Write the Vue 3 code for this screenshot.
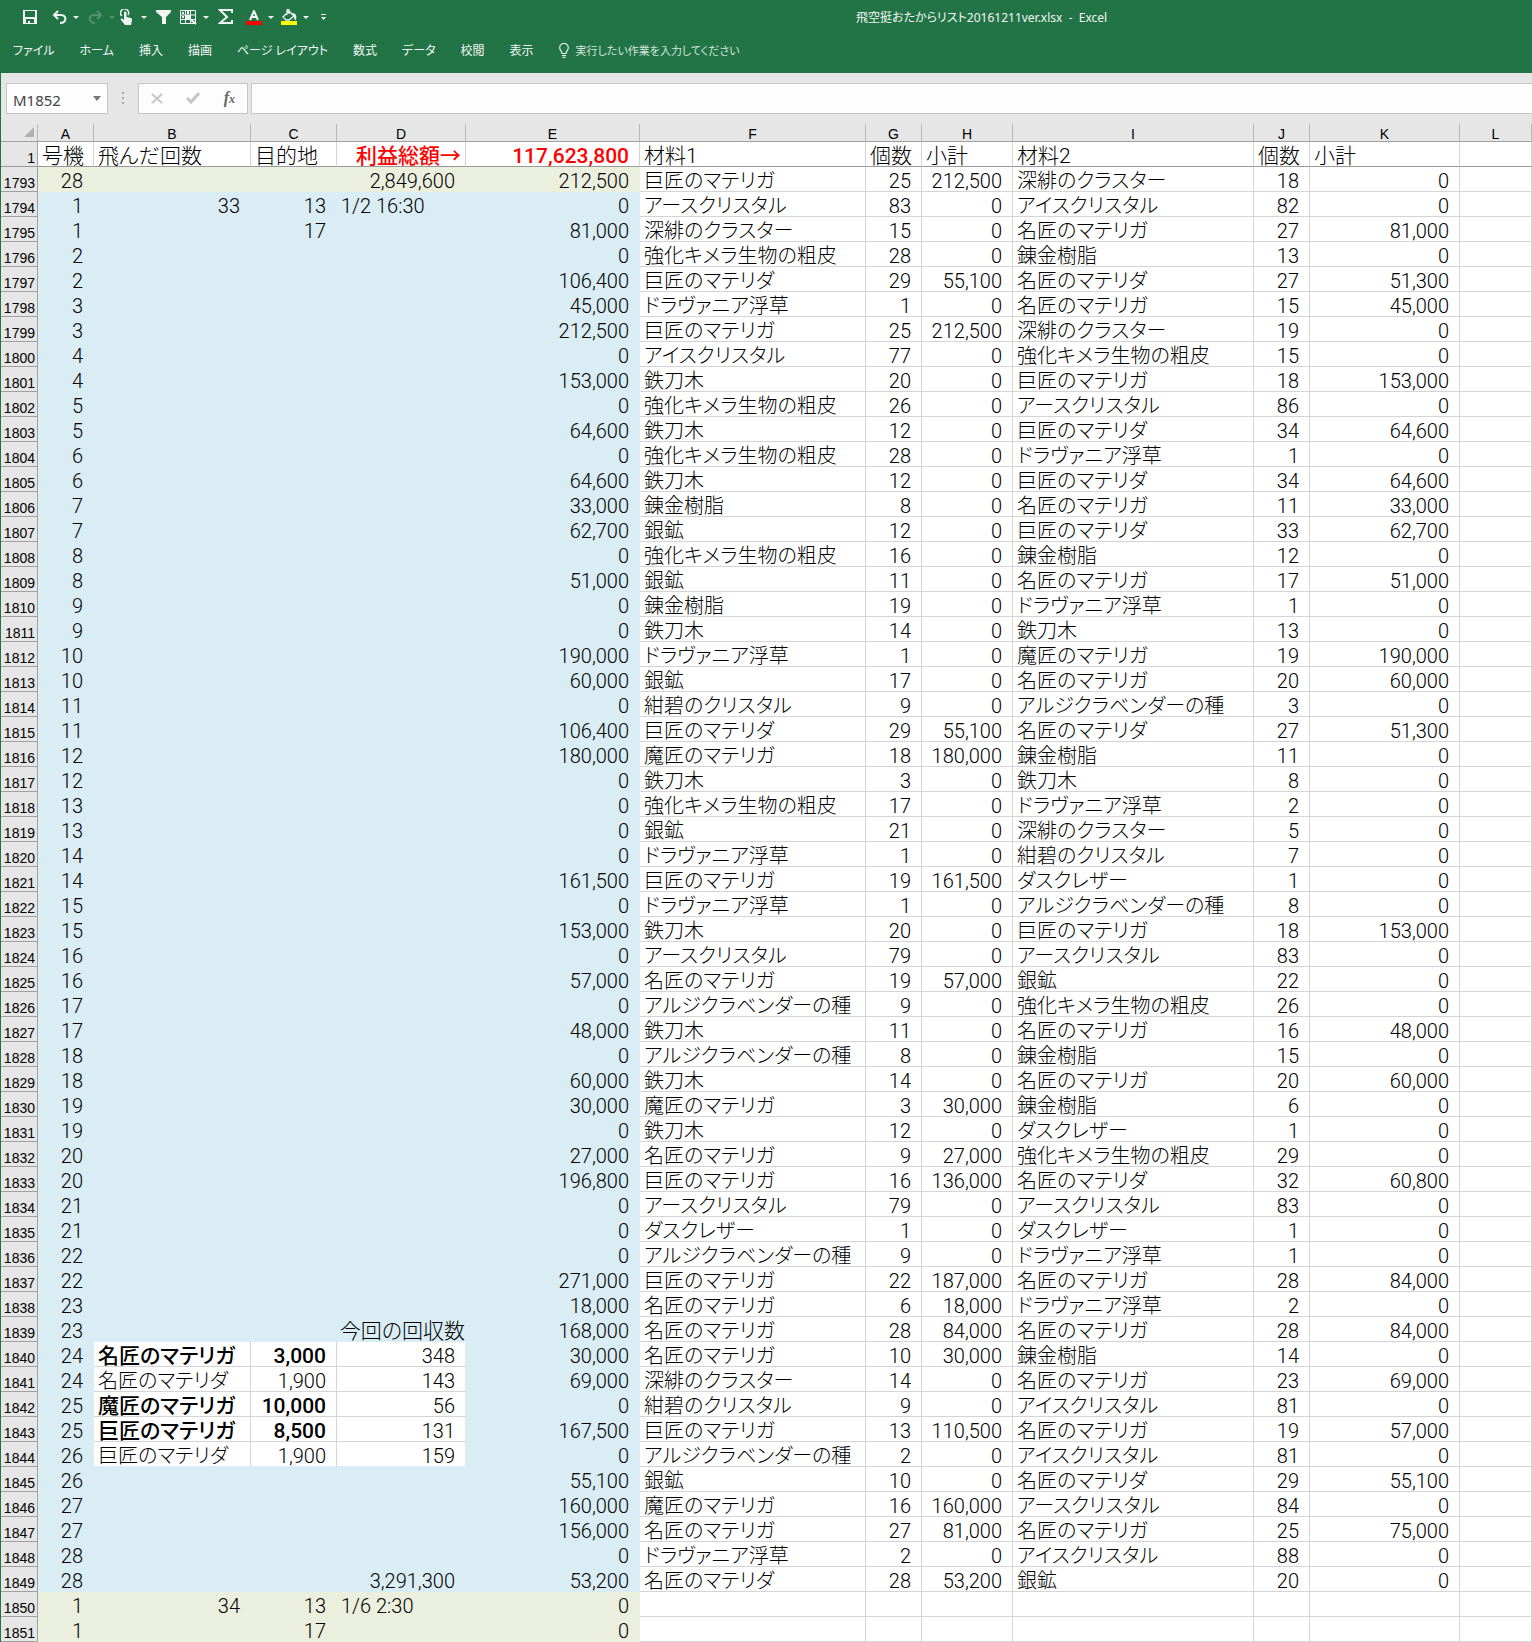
<script setup>
import { ref } from 'vue'

const cellName = ref('M1852')
const formula = ref('')
const tabs = ['ファイル', 'ホーム', '挿入', '描画', 'ページ レイアウト', '数式', 'データ', '校閲', '表示']
const columns = ['A', 'B', 'C', 'D', 'E', 'F', 'G', 'H', 'I', 'J', 'K', 'L']

const GA_MEI = '名匠のマテリガ'
const DA_MEI = '名匠のマテリダ'
const GA_KYO = '巨匠のマテリガ'
const DA_KYO = '巨匠のマテリダ'
const GA_MA = '魔匠のマテリガ'
const EARTH = 'アースクリスタル'
const ICE = 'アイスクリスタル'
const CLUSTER = '深緋のクラスター'
const CRYSTAL = '紺碧のクリスタル'
const HIDE = '強化キメラ生物の粗皮'
const RESIN = '錬金樹脂'
const WOOD = '鉄刀木'
const SILVER = '銀鉱'
const GRASS = 'ドラヴァニア浮草'
const SEED = 'アルジクラベンダーの種'
const LEATHER = 'ダスクレザー'

// 号機, 利益, 材料1, 個数, 小計, 材料2, 個数, 小計
const records = [
  [28, 212500, GA_KYO, 25, 212500, CLUSTER, 18, 0],
  [1, 0, EARTH, 83, 0, ICE, 82, 0],
  [1, 81000, CLUSTER, 15, 0, GA_MEI, 27, 81000],
  [2, 0, HIDE, 28, 0, RESIN, 13, 0],
  [2, 106400, DA_KYO, 29, 55100, DA_MEI, 27, 51300],
  [3, 45000, GRASS, 1, 0, GA_MEI, 15, 45000],
  [3, 212500, GA_KYO, 25, 212500, CLUSTER, 19, 0],
  [4, 0, ICE, 77, 0, HIDE, 15, 0],
  [4, 153000, WOOD, 20, 0, GA_KYO, 18, 153000],
  [5, 0, HIDE, 26, 0, EARTH, 86, 0],
  [5, 64600, WOOD, 12, 0, DA_KYO, 34, 64600],
  [6, 0, HIDE, 28, 0, GRASS, 1, 0],
  [6, 64600, WOOD, 12, 0, DA_KYO, 34, 64600],
  [7, 33000, RESIN, 8, 0, GA_MEI, 11, 33000],
  [7, 62700, SILVER, 12, 0, DA_KYO, 33, 62700],
  [8, 0, HIDE, 16, 0, RESIN, 12, 0],
  [8, 51000, SILVER, 11, 0, GA_MEI, 17, 51000],
  [9, 0, RESIN, 19, 0, GRASS, 1, 0],
  [9, 0, WOOD, 14, 0, WOOD, 13, 0],
  [10, 190000, GRASS, 1, 0, GA_MA, 19, 190000],
  [10, 60000, SILVER, 17, 0, GA_MEI, 20, 60000],
  [11, 0, CRYSTAL, 9, 0, SEED, 3, 0],
  [11, 106400, DA_KYO, 29, 55100, DA_MEI, 27, 51300],
  [12, 180000, GA_MA, 18, 180000, RESIN, 11, 0],
  [12, 0, WOOD, 3, 0, WOOD, 8, 0],
  [13, 0, HIDE, 17, 0, GRASS, 2, 0],
  [13, 0, SILVER, 21, 0, CLUSTER, 5, 0],
  [14, 0, GRASS, 1, 0, CRYSTAL, 7, 0],
  [14, 161500, GA_KYO, 19, 161500, LEATHER, 1, 0],
  [15, 0, GRASS, 1, 0, SEED, 8, 0],
  [15, 153000, WOOD, 20, 0, GA_KYO, 18, 153000],
  [16, 0, EARTH, 79, 0, EARTH, 83, 0],
  [16, 57000, GA_MEI, 19, 57000, SILVER, 22, 0],
  [17, 0, SEED, 9, 0, HIDE, 26, 0],
  [17, 48000, WOOD, 11, 0, GA_MEI, 16, 48000],
  [18, 0, SEED, 8, 0, RESIN, 15, 0],
  [18, 60000, WOOD, 14, 0, GA_MEI, 20, 60000],
  [19, 30000, GA_MA, 3, 30000, RESIN, 6, 0],
  [19, 0, WOOD, 12, 0, LEATHER, 1, 0],
  [20, 27000, GA_MEI, 9, 27000, HIDE, 29, 0],
  [20, 196800, GA_KYO, 16, 136000, DA_MEI, 32, 60800],
  [21, 0, EARTH, 79, 0, EARTH, 83, 0],
  [21, 0, LEATHER, 1, 0, LEATHER, 1, 0],
  [22, 0, SEED, 9, 0, GRASS, 1, 0],
  [22, 271000, GA_KYO, 22, 187000, GA_MEI, 28, 84000],
  [23, 18000, GA_MEI, 6, 18000, GRASS, 2, 0],
  [23, 168000, GA_MEI, 28, 84000, GA_MEI, 28, 84000],
  [24, 30000, GA_MEI, 10, 30000, RESIN, 14, 0],
  [24, 69000, CLUSTER, 14, 0, GA_MEI, 23, 69000],
  [25, 0, CRYSTAL, 9, 0, ICE, 81, 0],
  [25, 167500, GA_KYO, 13, 110500, GA_MEI, 19, 57000],
  [26, 0, SEED, 2, 0, ICE, 81, 0],
  [26, 55100, SILVER, 10, 0, DA_MEI, 29, 55100],
  [27, 160000, GA_MA, 16, 160000, EARTH, 84, 0],
  [27, 156000, GA_MEI, 27, 81000, GA_MEI, 25, 75000],
  [28, 0, GRASS, 2, 0, ICE, 88, 0],
  [28, 53200, DA_MEI, 28, 53200, SILVER, 20, 0],
  [1, 0],
  [1, 0]
]

// B〜D 列に値がある行
const extras = {
  1793: { d: 2849600 },
  1794: { b: 33, c: 13, d: '1/2 16:30' },
  1795: { c: 17 },
  1839: { d: '今回の回収数', flush: true },
  1840: { b: GA_MEI, c: 3000, d: 348, box: true, bold: true },
  1841: { b: DA_MEI, c: 1900, d: 143, box: true },
  1842: { b: GA_MA, c: 10000, d: 56, box: true, bold: true },
  1843: { b: GA_KYO, c: 8500, d: 131, box: true, bold: true },
  1844: { b: DA_KYO, c: 1900, d: 159, box: true, last: true },
  1849: { d: 3291300 },
  1850: { b: 34, c: 13, d: '1/6 2:30' },
  1851: { c: 17 }
}

const show = (v) => (typeof v === 'number' ? v.toLocaleString('en-US') : v ?? '')

const rows = records.map((r, i) => {
  const no = 1793 + i
  const x = extras[no] ?? {}
  const band = no === 1793 || no >= 1850 ? 'olive' : 'aqua'
  const values = [r[0], x.b, x.c, x.d, r[1], r[2], r[3], r[4], r[5], r[6], r[7], undefined]
  const cells = values.map((v, c) => {
    const boxed = x.box && c >= 1 && c <= 3
    return {
      text: show(v),
      cls: {
        num: typeof v === 'number',
        [band]: c <= 4 && !boxed,
        boxed,
        edge: boxed && c === 3,
        last: boxed && x.last,
        bold: x.bold && (c === 1 || c === 2),
        flush: x.flush && c === 3
      }
    }
  })
  return { no, cells }
})
</script>

<template>
  <div class="window">
    <header class="ribbon">
      <div class="titlebar">
        <div class="qat">
          <button class="tool save" aria-label="上書き保存">
            <svg width="14" height="14" viewBox="0 0 14 14"><path fill="#f0f5f2" fill-rule="evenodd" d="M0 0h14v14H0zM2 1v6h10V1zM3 9v4h2v-2h2v2h4V9z" /></svg>
          </button>
          <button class="tool undo" aria-label="元に戻す">
            <svg width="15" height="14" viewBox="0 0 15 14"><path fill="none" stroke="#f0f5f2" stroke-width="2" d="M6 1 2 5l4 4M2 5h7c6 0 6 8-1 8" /></svg>
            <i class="caret"></i>
          </button>
          <button class="tool redo" aria-label="やり直し">
            <svg width="15" height="14" viewBox="0 0 15 14"><path fill="none" stroke="#4f9470" stroke-width="2" d="m9 1 4 4-4 4M13 5H6C0 5 0 13 7 13" /></svg>
            <i class="caret dim"></i>
          </button>
          <button class="tool touch" aria-label="タッチ/マウス モードの切り替え">
            <svg width="13" height="16" viewBox="0 0 13 16"><path fill="none" stroke="#f0f5f2" stroke-width="1.5" d="M2 7a4 4 0 1 1 6-1" /><path fill="#f0f5f2" d="M4 4c0-2 2.500-2 2.500 0v4l4.500 1c1 .3 1 1 1 2l-1 5H5L1 11c-1-1 .5-2 1.500-1L4 11z" /></svg>
            <i class="caret"></i>
          </button>
          <button class="tool filter" aria-label="フィルター">
            <svg width="15" height="14" viewBox="0 0 15 14"><path fill="#f0f5f2" d="M0 0h15v2L10 7v7H6V7L0 2z" /></svg>
          </button>
          <button class="tool pivot" aria-label="表示範囲">
            <svg width="17" height="15" viewBox="0 0 17 15"><path fill="none" stroke="#f0f5f2" d="M.5.5h15v13H.5zM0 5h16M0 9.500h16M5.500 0v14M10.500 0v14" /><path fill="#f0f5f2" d="M6 5h5v5H6zM2 2h2v2H2zM2 6h2v2H2zM7 1h2v3H7z" /><path stroke="#f0f5f2" stroke-width="2" d="m10 9 6 5" /></svg>
            <i class="caret"></i>
          </button>
          <button class="tool sum" aria-label="オート SUM">
            <svg width="16" height="16" viewBox="0 0 16 16"><path fill="none" stroke="#f0f5f2" stroke-width="2" d="M14 4V1H2l7 7-7 6h12v-3" /></svg>
          </button>
          <button class="tool color" aria-label="フォントの色">
            <svg width="16" height="15" viewBox="0 0 16 15"><path fill="none" stroke="#f0f5f2" stroke-width="2" d="m4 10 4-9 4 9M5 7h6" /><path fill="#f00" d="M0 11h16v4H0z" /></svg>
            <i class="caret"></i>
          </button>
          <button class="tool fill" aria-label="塗りつぶしの色">
            <svg width="16" height="16" viewBox="0 0 16 16"><path fill="none" stroke="#f0f5f2" stroke-width="1.300" d="m2 8 6-6 5 5-5 4H5zM6 6V1q1.500-1.500 2 0v4" /><path fill="#f0f5f2" d="M11 4c4 0 5 3 4 7-2 0-2-2-2-4z" /><path fill="#ff0" d="M0 12h16v4H0z" /></svg>
            <i class="caret"></i>
          </button>
          <button class="tool" aria-label="クイック アクセス ツール バーのユーザー設定">
            <svg width="5" height="7" viewBox="0 0 5 7"><path fill="#f0f5f2" d="M0 0h5v1H0zM0 3h5L2.500 6z" /></svg>
          </button>
        </div>
        <div class="title">飛空挺おたからリスト20161211ver.xlsx&nbsp; -&nbsp; Excel</div>
      </div>
      <nav class="tabs">
        <button v-for="t in tabs" :key="t" class="tab">{{ t }}</button>
        <button class="tab tell">
          <svg width="10" height="15" viewBox="0 0 10 15"><path fill="none" stroke="#e3efe8" stroke-width="1.200" d="M3 10.500C3 8 .7 7.500.7 4.700a4.300 4.300 0 0 1 8.600 0C9.300 7.500 7 8 7 10.500zM3 12.500h4M3.500 14.300h3" /></svg>
          <span>実行したい作業を入力してください</span>
        </button>
      </nav>
    </header>

    <div class="formulabar">
      <div class="namebox">
        <input v-model="cellName" aria-label="名前ボックス" />
        <button aria-label="名前の一覧"><svg width="8" height="5" viewBox="0 0 8 5"><path fill="#777" d="M0 0h8L4 5z" /></svg></button>
      </div>
      <svg class="grip" width="3" height="12" viewBox="0 0 3 12"><path fill="#a8a8a8" d="M0 0h2v2H0zM0 5h2v2H0zM0 10h2v2H0z" /></svg>
      <div class="actions">
        <button aria-label="キャンセル"><svg width="12" height="11" viewBox="0 0 12 11"><path fill="none" stroke="#c6c6c6" stroke-width="2" d="m1 1 10 9M11 1 1 10" /></svg></button>
        <button aria-label="入力"><svg width="14" height="12" viewBox="0 0 14 12"><path fill="none" stroke="#c6c6c6" stroke-width="3" d="m1 6 4 4 8-9" /></svg></button>
        <button class="fx" aria-label="関数の挿入">f<small>x</small></button>
      </div>
      <input v-model="formula" class="formula" aria-label="数式バー" />
    </div>

    <table class="sheet">
      <colgroup>
        <col class="w-head" /><col class="w-s" /><col class="w-b" /><col class="w-c" /><col class="w-d" /><col class="w-e" />
        <col class="w-f" /><col class="w-s" /><col class="w-h" /><col class="w-i" /><col class="w-s" /><col class="w-k" /><col />
      </colgroup>
      <thead>
        <tr class="letters">
          <th class="corner"><svg width="10" height="10" viewBox="0 0 10 10"><path fill="#b2b2b2" d="M10 0v10H0z" /></svg></th>
          <th v-for="c in columns" :key="c" scope="col">{{ c }}</th>
        </tr>
        <tr class="frozen">
          <th scope="row">1</th>
          <td>号機</td>
          <td>飛んだ回数</td>
          <td>目的地</td>
          <td class="total right">利益総額→</td>
          <td class="total num">117,623,800</td>
          <td>材料1</td>
          <td>個数</td>
          <td>小計</td>
          <td>材料2</td>
          <td>個数</td>
          <td>小計</td>
          <td></td>
        </tr>
      </thead>
      <tbody>
        <tr v-for="row in rows" :key="row.no">
          <th scope="row">{{ row.no }}</th>
          <td v-for="(cell, i) in row.cells" :key="i" :class="cell.cls">{{ cell.text }}</td>
        </tr>
      </tbody>
    </table>
  </div>
</template>

<style>
body {
  margin: 0;
  background: #e6e6e6;
}
</style>

<style scoped>
* {
  box-sizing: border-box;
}
.window {
  border-left: 1px solid #227447;
  font-family: "Noto Sans", "Noto Sans CJK JP", sans-serif;
}
button,
input {
  margin: 0;
  padding: 0;
  border: 0;
  background: none;
  color: inherit;
  font: inherit;
}
.ribbon {
  height: 73px;
  background: #227447;
  color: #f2f7f4;
  font-size: 12px;
  font-feature-settings: "palt";
}
.titlebar {
  display: grid;
  grid-template-columns: 855px 1fr;
  align-items: center;
  height: 34px;
}
.qat {
  display: flex;
  align-items: center;
  padding-left: 22px;
}
.tool {
  display: flex;
  align-items: center;
  gap: 6px;
  margin-right: 9px;
}
.tool.save {
  margin-right: 15px;
}
.tool.redo {
  margin-right: 5px;
}
.tool.touch {
  gap: 8px;
}
.tool.color {
  margin-right: 7px;
}
.tool.sum,
.tool.fill {
  margin-right: 12px;
}
.tool svg {
  display: block;
}
.caret {
  border: 3px solid transparent;
  border-top-color: #f0f5f2;
  border-bottom: 0;
}
.caret.dim {
  border-top-color: #4f9470;
}
.title {
  white-space: nowrap;
}
.tabs {
  display: flex;
  align-items: center;
  gap: 25px;
  height: 32px;
  padding-left: 12px;
}
.tab {
  white-space: nowrap;
}
.tell {
  display: flex;
  align-items: center;
  gap: 7px;
  color: #d3e5da;
  font-size: 11px;
}
.formulabar {
  display: flex;
  align-items: center;
  height: 51px;
  padding: 0 0 1px 5px;
}
.namebox,
.actions,
.formula {
  height: 31px;
  border: 1px solid #c6c6c6;
  background: #fdfdfd;
}
.namebox {
  display: flex;
  align-items: center;
  width: 102px;
  color: #444;
  font-size: 15px;
}
.namebox input {
  flex: 1;
  min-width: 0;
  padding: 3px 0 0 6px;
  outline: 0;
}
.namebox button {
  display: flex;
  margin-right: 6px;
}
.grip {
  margin: 0 13px 0 14px;
}
.actions {
  display: flex;
  align-items: center;
  justify-content: space-between;
  width: 110px;
  margin-right: 3px;
  padding: 0 12px;
}
.fx {
  color: #666;
  font: italic bold 16px/16px "Liberation Serif", serif;
}
.fx small {
  font-size: 12px;
}
.formula {
  flex: 1;
  min-width: 0;
  border-right: 0;
  outline: 0;
}

.sheet {
  width: 100%;
  table-layout: fixed;
  border-collapse: separate;
  border-spacing: 0;
  background: #fff;
  color: #000;
  font-family: Roboto, "Noto Sans CJK JP", sans-serif;
  font-size: 20px;
  font-weight: 300;
  font-feature-settings: "palt";
  line-height: 20px;
}
.w-head { width: 37px; }
.w-s { width: 56px; }
.w-b { width: 157px; }
.w-c { width: 86px; }
.w-d { width: 129px; }
.w-e { width: 174px; }
.w-f { width: 226px; }
.w-h { width: 91px; }
.w-i { width: 241px; }
.w-k { width: 150px; }

.sheet th,
.sheet td {
  height: 25px;
  padding: 4px 0 0 4px;
  border-right: 1px solid #d4d4d4;
  border-bottom: 1px solid #d4d4d4;
  text-align: left;
  vertical-align: top;
  white-space: nowrap;
}
.sheet th {
  padding: 8px 2px 0 0;
  border-color: #a0a0a0;
  background: #e6e6e6;
  font-family: "Liberation Sans", sans-serif;
  font-size: 14px;
  font-weight: 400;
  line-height: 16px;
  text-align: right;
}
.sheet .letters th {
  height: 18px;
  padding: 3px 0 0;
  border-right: 1px solid #b8b8b8;
  line-height: 14px;
  text-align: center;
}
.sheet .letters .corner {
  padding: 3px 3px 0 0;
}
.corner svg {
  display: block;
  margin-left: auto;
}
.sheet .frozen th,
.sheet .frozen td {
  border-bottom-color: #999;
}
.sheet .frozen td,
.sheet .flush,
.sheet .bold {
  font-size: 21px;
}
.sheet .num {
  padding: 4px 10px 0 0;
  text-align: right;
}
.sheet .right {
  padding-right: 4px;
  text-align: right;
}
.sheet .total {
  color: #f00;
  font-weight: 500;
}
.sheet .bold {
  font-weight: 500;
}
.sheet .aqua {
  border-color: #daedf4;
  background: #daedf4;
}
.sheet .olive {
  border-color: #ebefde;
  background: #ebefde;
}
.sheet .edge {
  border-right-color: #daedf4;
}
.sheet .last {
  border-bottom-color: #daedf4;
}
.sheet .flush {
  padding-left: 0;
  text-align: right;
}
</style>
